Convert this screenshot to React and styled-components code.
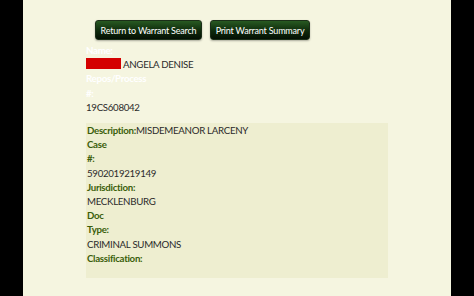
import React from "react";
import styled, { createGlobalStyle } from "styled-components";

const Global = createGlobalStyle`
  html, body { margin: 0; padding: 0; background: #000; }
  body { font-family: Lato, "Noto Sans", sans-serif; }
`;

const Page = styled.div`
  display: flex;
  justify-content: flex-start;
  height: 296px;
  background: #000;
  overflow: hidden;
`;

const Main = styled.main`
  margin-left: 23px;
  width: 428px;
  height: 296px;
  background: #f5f5e0;
  padding: 20px 0 0 63px;
  box-sizing: border-box;
  font-size: 9.7px;
  letter-spacing: -0.3px;
  line-height: 14.2px;
  color: #2a2a2a;
`;

const ButtonBar = styled.div`
  display: flex;
  gap: 8px;
  padding-left: 9px;
  margin-bottom: 3px;
`;

const Button = styled.button`
  height: 20px;
  width: ${(p) => p.$w}px;
  padding: 0;
  border: 1px solid #1b2e18;
  border-radius: 3px;
  background: linear-gradient(#285a22, #0e2a0c 55%, #041003);
  color: #fff;
  font-family: Lato, "Noto Sans", sans-serif;
  font-size: 9px;
  letter-spacing: -0.2px;
  white-space: nowrap;
  box-shadow: 0 1px 2px rgba(0, 0, 0, 0.3);
`;

const Label = styled.div`
  font-weight: bold;
  color: ${(p) => (p.$light ? "#ffffff" : "#3b5e0b")};
`;

const InlineLabel = styled.span`
  font-weight: bold;
  color: #3b5e0b;
`;

const Value = styled.div``;

const Redact = styled.span`
  display: inline-block;
  width: 35px;
  height: 11px;
  background: #d40000;
  vertical-align: -1px;
  margin-right: 2px;
`;

const Panel = styled.div`
  margin-top: 9px;
  width: 302px;
  height: 155px;
  background: #eeeed0;
  box-sizing: border-box;
  padding-left: 1px;
`;

export default function App() {
  return (
    <>
      <Global />
      <Page>
        <Main>
          <ButtonBar>
            <Button $w={107}>Return to Warrant Search</Button>
            <Button $w={100}>Print Warrant Summary</Button>
          </ButtonBar>
          <Label $light>Name:</Label>
          <Value>
            <Redact />
            ANGELA DENISE
          </Value>
          <Label $light>Repos/Process</Label>
          <Label $light>#:</Label>
          <Value>19CS608042</Value>
          <Panel>
            <Value>
              <InlineLabel>Description:</InlineLabel>MISDEMEANOR LARCENY
            </Value>
            <Label>Case</Label>
            <Label>#:</Label>
            <Value>5902019219149</Value>
            <Label>Jurisdiction:</Label>
            <Value>MECKLENBURG</Value>
            <Label>Doc</Label>
            <Label>Type:</Label>
            <Value>CRIMINAL SUMMONS</Value>
            <Label>Classification:</Label>
          </Panel>
        </Main>
      </Page>
    </>
  );
}
